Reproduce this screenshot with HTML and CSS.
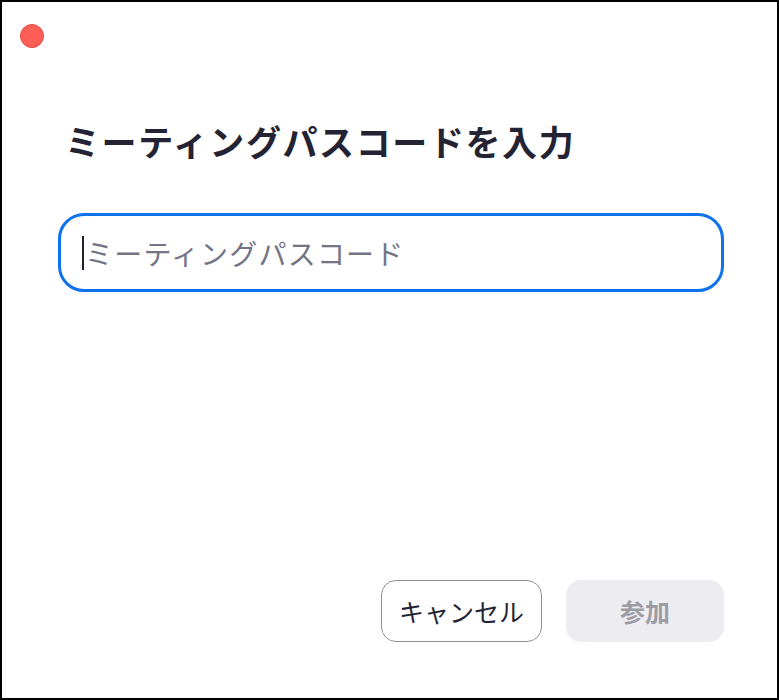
FILE: index.html
```html
<!DOCTYPE html>
<html lang="ja">
  <head>
    <meta charset="utf-8">
    <title>ミーティングパスコードを入力</title>
    <link rel="stylesheet" href="styles.css">
  </head>
  <body>
    <div class="window">
      <div class="titlebar">
        <span class="close"></span>
      </div>
      <div class="content">
        <h1 class="heading">ミーティングパスコードを入力</h1>
        <div class="field">
          <span class="caret"></span>
          <span class="placeholder">ミーティングパスコード</span>
        </div>
      </div>
      <div class="actions">
        <button class="btn cancel">キャンセル</button>
        <button class="btn join">参加</button>
      </div>
    </div>
  </body>
</html>
```

FILE: styles.css
```css
* {
  box-sizing: border-box;
}
html, body {
  margin: 0;
  background: #fff;
}
body {
  font-family: "Noto Sans CJK JP", "Noto Sans", sans-serif;
  color: #232333;
}
.window {
  width: 779px;
  height: 700px;
  border: 2px solid #000;
  display: flex;
  flex-direction: column;
}
.titlebar {
  height: 46px;
  padding: 22px 0 0 18px;
}
.close {
  display: block;
  width: 24px;
  height: 24px;
  border-radius: 50%;
  background: #fd5f57;
  border: 1px solid #e5483f;
}
.content {
  flex: 1;
  padding: 0 53px 0 56px;
}
.heading {
  margin: 71px 0 0 7px;
  font-size: 35px;
  line-height: 44px;
  font-weight: 700;
  letter-spacing: 1.6px;
}
.field {
  margin-top: 50px;
  height: 79px;
  border: 3px solid #0e72ed;
  border-radius: 26px;
  display: flex;
  align-items: center;
  padding-left: 21px;
}
.caret {
  width: 2px;
  height: 34px;
  background: #232333;
  margin-right: 1px;
}
.placeholder {
  font-size: 28px;
  color: #747487;
  letter-spacing: 1.2px;
}
.actions {
  display: flex;
  justify-content: flex-end;
  gap: 24px;
  padding: 0 53px 56px 0;
}
.btn {
  height: 62px;
  font-family: inherit;
  font-size: 25px;
  border-radius: 15px;
}
.cancel {
  width: 161px;
  background: #fff;
  border: 1.5px solid #8e8e99;
  color: #232333;
}
.join {
  width: 158px;
  background: #ededf1;
  border: none;
  color: #9c9ca4;
  font-weight: 700;
}
```
